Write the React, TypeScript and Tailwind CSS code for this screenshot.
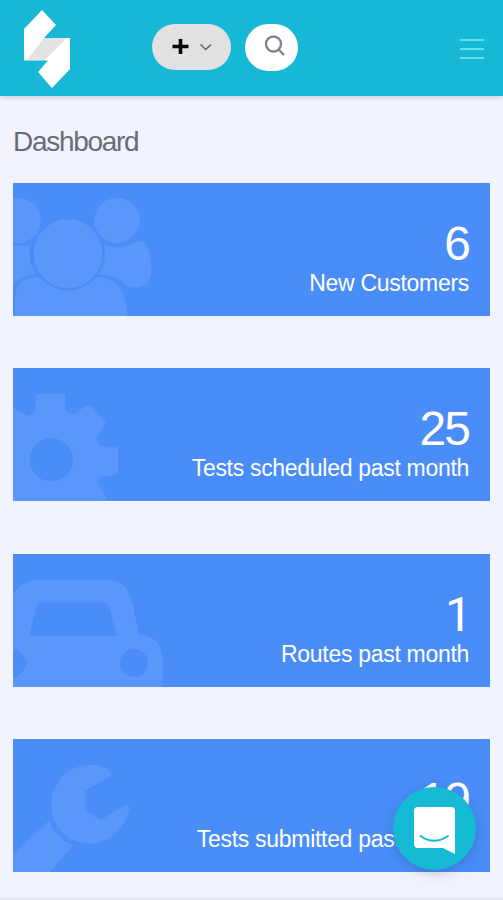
import type { ReactNode } from "react";

interface StatCardProps {
  value: string;
  label: string;
  valueClass?: string;
  children: ReactNode;
}

/** Blue dashboard tile with a faded icon bleeding off its left edge. */
function StatCard({ value, label, valueClass = "", children }: StatCardProps) {
  return (
    <section className="relative flex h-[133px] flex-col items-end overflow-hidden bg-[#4a8df8] pt-[37px] pr-[21px] text-white">
      <svg
        className="absolute top-0 left-0 h-[133px] w-[150px]"
        viewBox="39 25 450 399"
        fill="#5997fb"
        aria-hidden="true"
      >
        {children}
      </svg>
      <p className={`text-[48px] leading-[48px] tracking-[-2px] ${valueClass}`}>
        {value}
      </p>
      <p className="text-[23px] leading-[30px] tracking-[-0.3px] whitespace-nowrap">
        {label}
      </p>
    </section>
  );
}

function UsersIcon() {
  return (
    <g transform="translate(0 -179)">
      <circle cx="54" cy="316" r="68" />
      <circle cx="351" cy="316" r="68" />
      <path d="M0 392H90Q84 440 106 478Q60 480 39 510H0Z" />
      <path d="M313 390Q350 405 390 389Q416 376 427 378Q454 398 454 460Q454 517 406 517H385Q356 480 298 479Q318 438 313 390Z" />
      <path d="M45 610V560Q45 487 107 487Q126 487 143 505Q203 549 263 505Q280 487 300 487Q340 487 363 525Q382 560 382 610Z" />
      <circle cx="204" cy="416" r="111" fill="#4a8df8" />
      <circle cx="204" cy="416" r="103" />
    </g>
  );
}

function GearIcon() {
  return (
    <path
      fillRule="evenodd"
      d="M108 110Q109 103 116 103H190Q196 103 196 110V155L222 165L260 137Q266 133 273 140L315 184Q319 189 313 196L290 239L299 260L349 263Q355 264 355 270V337Q355 343 349 344L300 351L290 371L318 409V430H30V140L82 168L104 157ZM154 235A65 65 0 1 0 154 365A65 65 0 1 0 154 235Z"
    />
  );
}

function CarIcon() {
  return (
    <path
      fillRule="evenodd"
      d="M39 424V150Q62 103 120 103H333Q366 103 385 140Q395 158 402 194L417 268Q488 270 488 348V424ZM122 170Q112 170 108 187L87 270H350L328 187Q324 170 313 170ZM402 310A42 42 0 1 0 402 394A42 42 0 1 0 402 310ZM39 310Q54 310 70 329L82 350L70 375Q55 393 39 397Z"
    />
  );
}

function WrenchIcon() {
  return (
    <>
      <path d="M333 130Q331 112 292 104Q224 96 181 144Q151 181 154 235Q159 287 207 322Q251 348 303 334Q367 313 388 237Q390 219 376 223L303 268L256 237V180L320 143Q332 138 333 130Z" />
      <path d="M147 270Q168 321 218 345L150 424H39V370Z" />
    </>
  );
}

function Header() {
  return (
    <header className="flex h-24 items-start bg-[#16b8d5] pl-6 shadow-[0_1px_5px_rgba(80,90,120,0.3)]">
      <svg className="mt-[10px] h-[78px] w-[46px]" viewBox="24 10 46 78" aria-hidden="true">
        <path fill="#fff" d="M24 29L42 10L56 25L44 38H70V69L52 88L38 72L48 60.5H24Z" />
        <path fill="#e4e4e6" d="M44 38H67L45 60H27Z" />
      </svg>
      <button
        type="button"
        aria-label="Create"
        className="mt-6 ml-[82px] h-[46px] w-[79px] rounded-full bg-[#e1e1e2]"
      >
        <svg className="h-[46px] w-[79px]" viewBox="0 0 79 46" fill="none">
          <path d="M20.5 22.5H36.5M28.5 15V30" stroke="#050505" strokeWidth="3.6" />
          <path d="M48.5 20.5L53.7 25.5L59 20.5" stroke="#666" strokeWidth="1.6" />
        </svg>
      </button>
      <button
        type="button"
        aria-label="Search"
        className="mt-6 ml-[14px] h-[47px] w-[53px] rounded-full bg-white"
      >
        <svg
          className="h-[47px] w-[53px]"
          viewBox="0 0 53 47"
          fill="none"
          stroke="#7d8794"
          strokeWidth="2.4"
        >
          <circle cx="28.5" cy="20" r="7.5" />
          <path d="M33.7 25.5L39 31" />
        </svg>
      </button>
      <button type="button" aria-label="Menu" className="mt-[39px] ml-[162px] flex flex-col gap-[7px]">
        <span className="h-[2px] w-6 bg-[#65def0]" />
        <span className="h-[2px] w-6 bg-[#65def0]" />
        <span className="h-[2px] w-6 bg-[#65def0]" />
      </button>
    </header>
  );
}

export default function App() {
  return (
    <div className="relative h-[900px] w-[503px] overflow-hidden border-b-2 border-[#e6e7ef] bg-[#f1f4fe] font-['Liberation_Sans',Arial,sans-serif]">
      <Header />
      <main className="px-[13px] pt-[30px]">
        <h1 className="text-[28px] leading-8 tracking-[-1.3px] text-[#6c6d70]">Dashboard</h1>
        <div className="mt-[25px] flex flex-col gap-[52.4px]">
          <StatCard value="6" label="New Customers">
            <UsersIcon />
          </StatCard>
          <StatCard value="25" label="Tests scheduled past month">
            <GearIcon />
          </StatCard>
          <StatCard
            value="1"
            label="Routes past month"
            valueClass="-mr-px font-['Roboto',sans-serif]"
          >
            <CarIcon />
          </StatCard>
          <StatCard value="19" label="Tests submitted past month">
            <WrenchIcon />
          </StatCard>
        </div>
      </main>

      {/* Chat launcher floats over the last tile */}
      <button
        type="button"
        aria-label="Open chat"
        className="absolute top-[787px] left-[393px] size-[83px] rounded-full bg-[#15bad3] shadow-[0_3px_12px_rgba(30,50,110,0.25)]"
      >
        <svg className="size-[83px]" viewBox="0 0 83 83" fill="none">
          <path fill="#fff" d="M25 20H58Q62 20 62 24V67L50 61H25Q21 61 21 57V24Q21 20 25 20Z" />
          <path d="M27.5 49Q41 58.5 55 49" stroke="#15bad3" strokeWidth="2" strokeLinecap="round" />
        </svg>
      </button>
    </div>
  );
}
